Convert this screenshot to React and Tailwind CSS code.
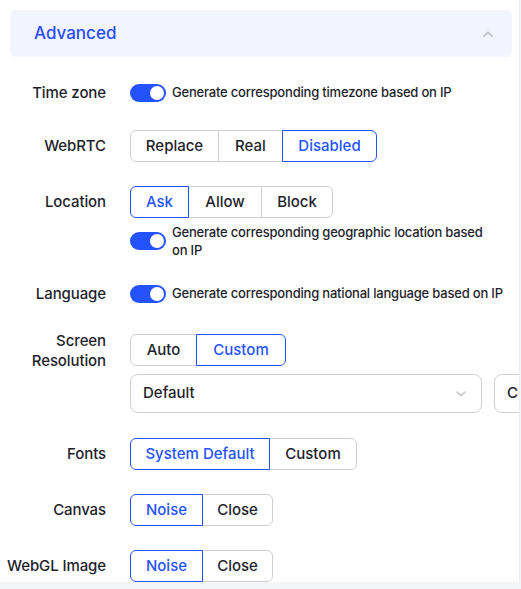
import React, { useState } from 'react';

const font = { fontFamily: 'Inter, "Noto Sans", sans-serif' };

const Toggle = ({ on = true }) => (
  <span
    className={`relative inline-flex h-[18px] w-[36px] shrink-0 items-center rounded-full ${
      on ? 'bg-[#2552ff]' : 'bg-[#c9cbd1]'
    }`}
  >
    <span
      className={`absolute top-[2px] h-[14px] w-[14px] rounded-full bg-white ${on ? 'left-[20px]' : 'left-[2px]'}`}
    />
  </span>
);

const Segmented = ({ options, value, onChange }) => (
  <div className="flex h-8">
    {options.map((opt, i) => {
      const active = opt.label === value;
      const first = i === 0;
      const last = i === options.length - 1;
      return (
        <button
          key={opt.label}
          onClick={() => onChange(opt.label)}
          className={`relative flex h-8 items-center justify-center border text-[15px] font-medium ${opt.w} ${
            first ? 'rounded-l-md' : '-ml-px'
          } ${last ? 'rounded-r-md' : ''} ${
            active ? 'z-10 border-[#2552ff] text-[#2552ff]' : 'border-[#cfd0d6] text-[#1e1f2b]'
          }`}
        >
          {opt.label}
        </button>
      );
    })}
  </div>
);

const Row = ({ label, children, className = '' }) => (
  <div className={`flex gap-6 ${className}`}>
    <div className="w-[106px] shrink-0 text-right text-[15px] font-medium leading-8 tracking-[-0.1px] text-[#1e1f2b]">
      {label}
    </div>
    <div className="flex min-w-0 flex-1 flex-col">{children}</div>
  </div>
);

const App = () => {
  const [webrtc, setWebrtc] = useState('Disabled');
  const [location, setLocation] = useState('Ask');
  const [resolution, setResolution] = useState('Custom');
  const [fonts, setFonts] = useState('System Default');
  const [canvas, setCanvas] = useState('Noise');
  const [webgl, setWebgl] = useState('Noise');

  return (
    <div className="h-[589px] w-[521px] overflow-hidden bg-[#f4f5f7]" style={font}>
      <div className="h-[582px] w-[520px] overflow-hidden border-r border-[#eceef2] bg-white pt-[10px]">
        <div className="ml-[10px] flex h-[47px] w-[502px] items-center justify-between rounded-md bg-[#f2f5ff] pl-6 pr-[18px]">
          <span className="text-[17px] font-medium text-[#2a4bff]">Advanced</span>
          <svg width="12" height="8" viewBox="0 0 12 8" className="mt-[1px]">
            <path d="M2 6 L6 2.5 L10 6" fill="none" stroke="#c3c5cc" strokeWidth="2" strokeLinecap="round" />
          </svg>
        </div>

        <Row label="Time zone" className="mt-5">
          <div className="flex h-8 items-center gap-[6px]">
            <Toggle />
            <span className="whitespace-nowrap text-[13px] font-medium tracking-[-0.2px] text-[#1e1f2b]">
              Generate corresponding timezone based on IP
            </span>
          </div>
        </Row>

        <Row label="WebRTC" className="mt-[21px]">
          <Segmented
            value={webrtc}
            onChange={setWebrtc}
            options={[
              { label: 'Replace', w: 'w-[89px]' },
              { label: 'Real', w: 'w-[65px]' },
              { label: 'Disabled', w: 'w-[95px]' },
            ]}
          />
        </Row>

        <Row label="Location" className="mt-6">
          <Segmented
            value={location}
            onChange={setLocation}
            options={[
              { label: 'Ask', w: 'w-[59px]' },
              { label: 'Allow', w: 'w-[74px]' },
              { label: 'Block', w: 'w-[72px]' },
            ]}
          />
          <div className="mt-[5px] flex items-center gap-[6px]">
            <Toggle />
            <span className="w-[315px] text-[13px] font-medium leading-[18px] tracking-[-0.2px] text-[#1e1f2b]">
              Generate corresponding geographic location based on IP
            </span>
          </div>
        </Row>

        <Row label="Language" className="mt-[19px]">
          <div className="flex h-8 items-center gap-[6px]">
            <Toggle />
            <span className="whitespace-nowrap text-[13px] font-medium tracking-[-0.2px] text-[#1e1f2b]">
              Generate corresponding national language based on IP
            </span>
          </div>
        </Row>

        <Row
          label={
            <span className="-mt-[3px] block leading-5">
              Screen
              <br />
              Resolution
            </span>
          }
          className="mt-6"
        >
          <Segmented
            value={resolution}
            onChange={setResolution}
            options={[
              { label: 'Auto', w: 'w-[67px]' },
              { label: 'Custom', w: 'w-[90px]' },
            ]}
          />
          <div className="mt-2 flex gap-3">
            <div className="flex h-[39px] w-[352px] shrink-0 items-center justify-between rounded-lg border border-[#cfd0d6] pl-3 pr-[14px]">
              <span className="text-[15px] font-medium text-[#1e1f2b]">Default</span>
              <svg width="12" height="8" viewBox="0 0 12 8">
                <path d="M2 2 L6 5.5 L10 2" fill="none" stroke="#c3c5cc" strokeWidth="1.6" strokeLinecap="round" />
              </svg>
            </div>
            <div className="flex h-[39px] w-[80px] shrink-0 items-center rounded-lg border border-[#cfd0d6] pl-3">
              <span className="text-[15px] font-medium text-[#1e1f2b]">Custom</span>
            </div>
          </div>
        </Row>

        <Row label="Fonts" className="mt-[25px]">
          <Segmented
            value={fonts}
            onChange={setFonts}
            options={[
              { label: 'System Default', w: 'w-[140px]' },
              { label: 'Custom', w: 'w-[88px]' },
            ]}
          />
        </Row>

        <Row label="Canvas" className="mt-6">
          <Segmented
            value={canvas}
            onChange={setCanvas}
            options={[
              { label: 'Noise', w: 'w-[73px]' },
              { label: 'Close', w: 'w-[71px]' },
            ]}
          />
        </Row>

        <Row label="WebGL Image" className="mt-6">
          <Segmented
            value={webgl}
            onChange={setWebgl}
            options={[
              { label: 'Noise', w: 'w-[73px]' },
              { label: 'Close', w: 'w-[71px]' },
            ]}
          />
        </Row>
      </div>
    </div>
  );
};

export default App;
